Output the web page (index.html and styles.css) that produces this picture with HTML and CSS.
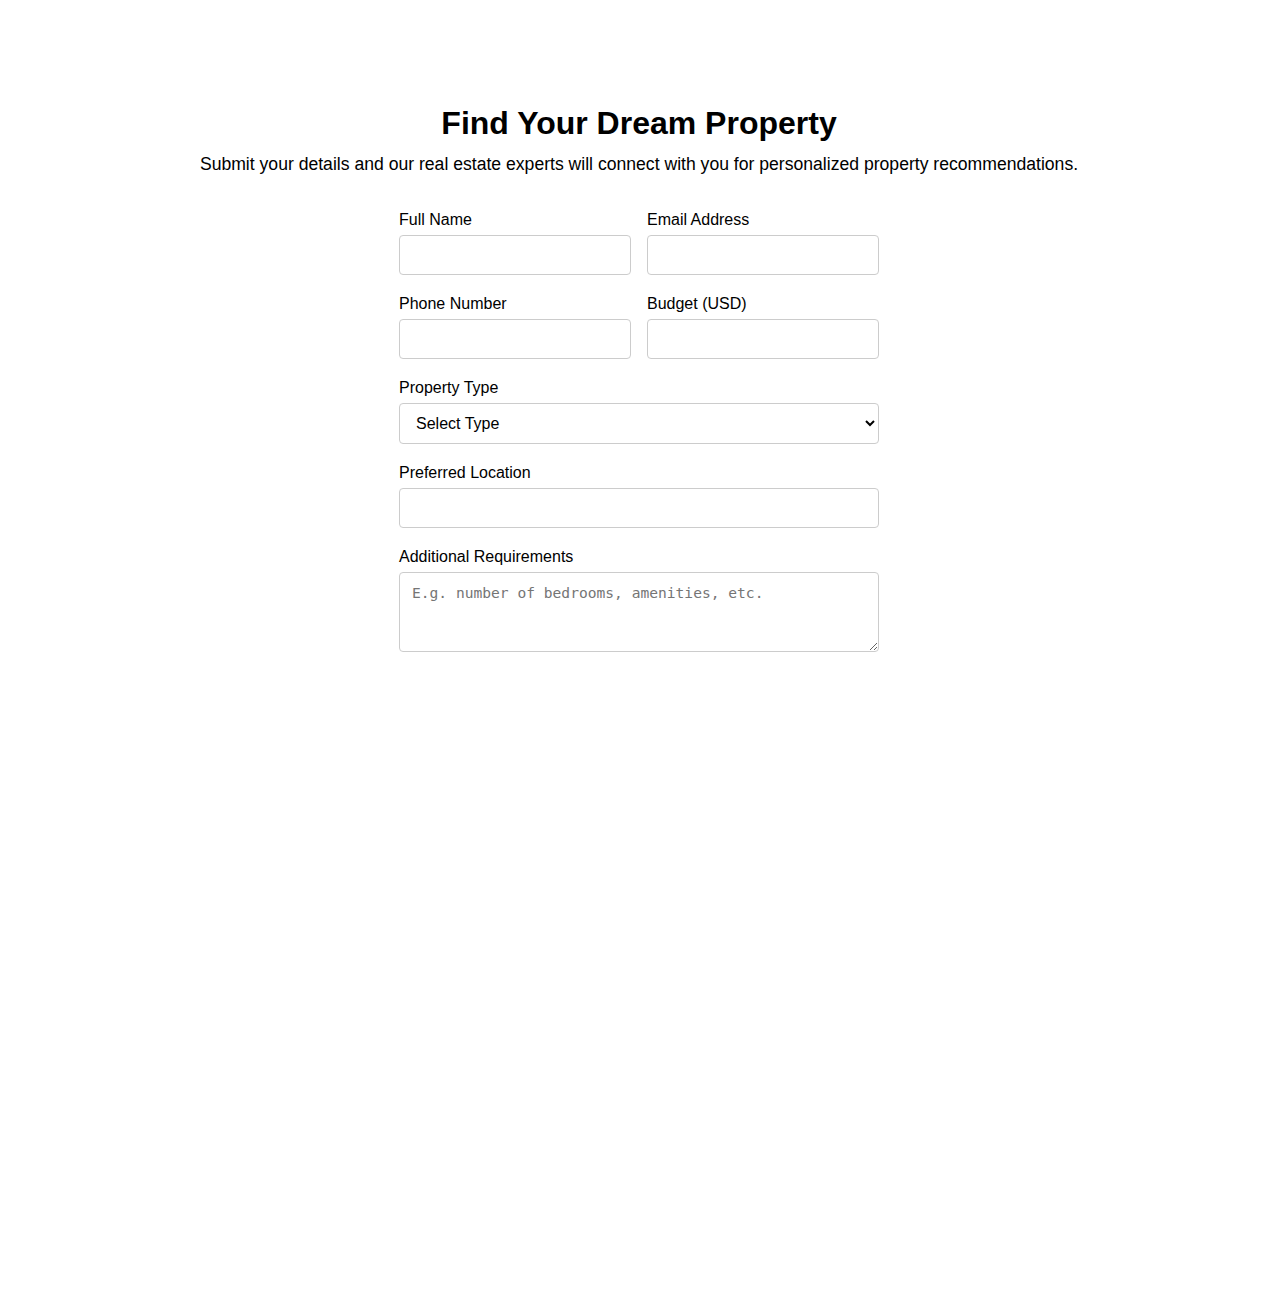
FILE: index.html
```html
<html>
	<head>
		<meta charset="utf-8">
		<meta name="viewport" content="width=device-width, initial-scale=1.0">
		<title>Find Your Dream Property</title>
		<link rel="stylesheet" href="styles.css">
	</head>

	<body>
		<div class="page">
			<h1 class="title">Find Your Dream Property</h1>
			<p class="intro">Submit your details and our real estate experts will connect with you for personalized property recommendations.</p>

			<form class="lead-form">
				<div class="row">
					<div class="field">
						<label for="name">Full Name</label>
						<input type="text" id="name">
					</div>
					<div class="field">
						<label for="email">Email Address</label>
						<input type="email" id="email">
					</div>
				</div>

				<div class="row">
					<div class="field">
						<label for="phone">Phone Number</label>
						<input type="tel" id="phone">
					</div>
					<div class="field">
						<label for="budget">Budget (USD)</label>
						<input type="number" id="budget">
					</div>
				</div>

				<div class="field">
					<label for="type">Property Type</label>
					<select id="type">
						<option>Select Type</option>
						<option>Apartment</option>
						<option>House</option>
						<option>Condo</option>
						<option>Land</option>
					</select>
				</div>

				<div class="field">
					<label for="location">Preferred Location</label>
					<input type="text" id="location">
				</div>

				<div class="field">
					<label for="notes">Additional Requirements</label>
					<textarea id="notes" placeholder="E.g. number of bedrooms, amenities, etc."></textarea>
				</div>
			</form>
		</div>
	</body>
</html>
```

FILE: styles.css
```css
body {
	margin: 0;
	background: #fff;
	color: #000;
	font-family: "Liberation Sans", Arial, sans-serif;
}

.page {
	padding-top: 105px;
}

.title {
	margin: 0 0 12px;
	font-size: 32px;
	text-align: center;
}

.intro {
	margin: 0 0 36px;
	font-size: 17.6px;
	text-align: center;
}

.lead-form {
	width: 480px;
	margin: 0 auto;
}

.row {
	display: flex;
	gap: 16px;
}

.row .field {
	flex: 1;
}

.field {
	margin-bottom: 20px;
}

.field label {
	display: block;
	font-size: 16px;
	margin-bottom: 6px;
}

.field input,
.field select,
.field textarea {
	display: block;
	width: 100%;
	box-sizing: border-box;
	border: 1px solid #ccc;
	border-radius: 4px;
	background: #fff;
	padding: 0 12px;
	height: 40px;
	font-family: "Liberation Sans", Arial, sans-serif;
	font-size: 16px;
}

.field select {
	height: 41px;
	color: #000;
}

.field textarea {
	height: 80px;
	padding: 11px 12px;
	font-family: "DejaVu Sans Mono", monospace;
	font-size: 14.6px;
}

.field textarea::placeholder {
	color: #757575;
}
```
